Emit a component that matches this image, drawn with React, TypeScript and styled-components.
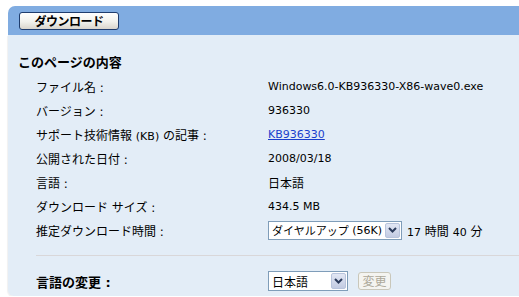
import React from 'react'
import styled, { createGlobalStyle } from 'styled-components'

const GlobalStyle = createGlobalStyle`
  body {
    margin: 0;
    background: #fff;
    color: #000;
    font-family: "DejaVu Sans", "Noto Sans CJK JP", sans-serif;
    font-size: 12px;
  }
`

type Row = {
  label: React.ReactNode;
  value: React.ReactNode;
};

function Chevron() {
  return (
    <svg width="9" height="6" viewBox="0 0 9 6">
      <path d="M1 1 L4.5 4.5 L8 1" fill="none" stroke="#2c3c5c" strokeWidth="2" />
    </svg>
  )
}

function FakeSelect(props: { width: number; height: number; small?: boolean; children: React.ReactNode }) {
  return (
    <SelectBox $width={props.width} $height={props.height}>
      <SelectText $small={props.small}>{props.children}</SelectText>
      <ArrowBox><Chevron /></ArrowBox>
    </SelectBox>
  )
}

function App() {
  const rows: Row[] = [
    { label: 'ファイル名 :', value: <Lat>Windows6.0-KB936330-X86-wave0.exe</Lat> },
    { label: 'バージョン :', value: <Lat>936330</Lat> },
    {
      label: <>サポート技術情報 <Lat>(KB)</Lat> の記事 :</>,
      value: <Link href="#">KB936330</Link>
    },
    { label: '公開された日付 :', value: <Lat>2008/03/18</Lat> },
    { label: '言語 :', value: '日本語' },
    { label: 'ダウンロード サイズ :', value: <Lat>434.5 MB</Lat> },
  ]

  return (
    <>
      <GlobalStyle />
      <Page>
        <Header>
          <DownloadButton>ダウンロード</DownloadButton>
        </Header>
        <Panel>
          <Title>このページの内容</Title>
          <InfoGrid>
            {rows.map((row, i) => (
              <React.Fragment key={i}>
                <Label>{row.label}</Label>
                <Value>{row.value}</Value>
              </React.Fragment>
            ))}
            <Label>推定ダウンロード時間 :</Label>
            <Value>
              <FakeSelect width={134} height={19} small>
                ダイヤルアップ&nbsp;<Lat>(56K)</Lat>
              </FakeSelect>
              <Duration><Lat>17</Lat> 時間 <Lat>40</Lat> 分</Duration>
            </Value>
          </InfoGrid>
          <Separator />
          <InfoGrid $top={13}>
            <BoldLabel>言語の変更 :</BoldLabel>
            <Value>
              <FakeSelect width={80} height={20}>日本語</FakeSelect>
              <ChangeButton disabled>変更</ChangeButton>
            </Value>
          </InfoGrid>
        </Panel>
      </Page>
    </>
  )
}

const Page = styled.div`
  padding: 6px 0 0 8px;
  overflow: hidden;
`

const Header = styled.div`
  height: 29px;
  background: #80ace1;
  border-top-left-radius: 7px;
  display: flex;
  align-items: center;
  padding-left: 11px;
`

const DownloadButton = styled.button`
  width: 100px;
  height: 18px;
  box-sizing: border-box;
  border: 1px solid #1f3d6e;
  border-radius: 3px;
  background: linear-gradient(#ffffff, #f1f1ec 55%, #d9d5cc);
  font-family: "Noto Sans CJK JP", sans-serif;
  font-size: 12px;
  font-weight: bold;
  line-height: 14px;
  padding: 0;
  color: #000;
  letter-spacing: -0.5px;
`

const Panel = styled.div`
  background: #e3edf7;
  padding: 15px 0 3px 0;
  border-bottom-left-radius: 6px;
  box-shadow: -1px 1px 1px rgba(0, 0, 0, 0.06);
`

const Title = styled.div`
  padding-left: 10px;
  line-height: 24px;
  font-family: "Noto Sans CJK JP", sans-serif;
  font-size: 13px;
  font-weight: bold;
`

const InfoGrid = styled.div<{ $top?: number }>`
  display: grid;
  grid-template-columns: 232px 1fr;
  grid-auto-rows: 24px;
  align-items: center;
  padding-left: 28px;
  margin-top: ${p => p.$top || 0}px;
`

const Label = styled.div`
  font-size: 12px;
  white-space: nowrap;
`

const BoldLabel = styled(Label)`
  font-size: 13px;
  font-weight: bold;
`

const Value = styled.div`
  display: flex;
  align-items: center;
  font-size: 12px;
  white-space: nowrap;
`

const Lat = styled.span`
  font-family: "DejaVu Sans", sans-serif;
  font-size: 11px;
`

const Link = styled.a`
  font-family: "DejaVu Sans", sans-serif;
  font-size: 11px;
  color: #1a3fcc;
  text-decoration: underline;
`

const SelectBox = styled.div<{ $width: number; $height: number }>`
  display: flex;
  width: ${p => p.$width}px;
  height: ${p => p.$height}px;
  box-sizing: border-box;
  border: 1px solid #7f9db9;
  background: #fff;
`

const SelectText = styled.div<{ $small?: boolean }>`
  flex: 1;
  display: flex;
  align-items: center;
  padding-left: 3px;
  font-size: ${p => (p.$small ? '11px' : '12px')};
  white-space: nowrap;
  overflow: hidden;
`

const ArrowBox = styled.div`
  width: 15px;
  margin: 1px;
  box-sizing: border-box;
  border: 1px solid #b8c4dc;
  border-radius: 2px;
  background: linear-gradient(#e2e7f4, #c2cbe2);
  display: flex;
  align-items: center;
  justify-content: center;
`

const Duration = styled.span`
  margin-left: 5px;
`

const Separator = styled.div`
  margin: 13px 0 0 28px;
  border-top: 1px solid #d9d7d9;
`

const ChangeButton = styled.button`
  margin-left: 10px;
  width: 33px;
  height: 18px;
  box-sizing: border-box;
  padding: 0;
  border: 1px solid #c9c7ba;
  border-radius: 3px;
  background: #f4f4f0;
  color: #aca899;
  font-family: "Noto Sans CJK JP", sans-serif;
  font-size: 12px;
  line-height: 14px;
`

export default App
